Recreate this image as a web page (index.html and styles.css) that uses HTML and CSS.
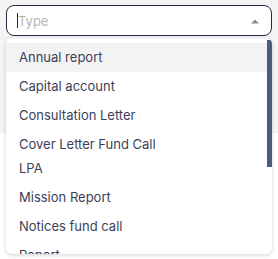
FILE: index.html
```html
<!DOCTYPE html>
<html lang="en">
<head>
    <meta charset="UTF-8">
    <meta name="viewport" content="width=device-width, initial-scale=1.0">
    <title>Type select</title>
    <link rel="stylesheet" href="styles.css">
</head>
<body>
    <div class="top-band"></div>
    <div class="select">
        <div class="select-input">
            <span class="caret"></span>
            <span class="placeholder">Type</span>
            <svg class="arrow" width="10" height="6" viewBox="0 0 10 6">
                <path d="M1 5.5 L5 1.5 L9 5.5 Z" fill="#8a8a8a"/>
            </svg>
        </div>
        <div class="menu">
            <div class="menu-list">
                <div class="option active">Annual report</div>
                <div class="option">Capital account</div>
                <div class="option">Consultation Letter</div>
                <div class="option short">Cover Letter Fund Call</div>
                <div class="option">LPA</div>
                <div class="option">Mission Report</div>
                <div class="option">Notices fund call</div>
                <div class="option">Report</div>
            </div>
            <div class="scroll-thumb"></div>
        </div>
    </div>
</body>
</html>
```

FILE: styles.css
```css
body {
    margin: 0;
    padding: 0;
    background-color: #fff;
    font-family: Inter, "Noto Sans", sans-serif;
    color: #3b3f58;
    width: 278px;
    height: 259px;
    overflow: hidden;
    position: relative;
}

.top-band {
    position: absolute;
    top: 0;
    left: 0;
    right: 0;
    height: 133px;
    background-color: #f4f4f4;
}

.select {
    position: relative;
    padding: 5px 6px 0 6px;
}

.select-input {
    display: flex;
    align-items: center;
    height: 29px;
    padding: 0 11px 0 10px;
    background: #fff;
    border: 1px solid #232a44;
    border-radius: 8px;
}

.caret {
    width: 1px;
    height: 15px;
    background: #232a44;
}

.placeholder {
    flex: 1;
    font-size: 13px;
    color: #b3b3b8;
}

.arrow {
    display: block;
}

.menu {
    position: relative;
    margin-top: 2px;
    height: 216px;
    background: #fff;
    border-radius: 6px;
    box-shadow: 0 1px 4px rgba(0, 0, 0, 0.18);
    overflow: hidden;
}

.menu-list {
    padding-top: 5px;
}

.option {
    height: 29px;
    line-height: 29px;
    padding-left: 13px;
    font-size: 13px;
    white-space: nowrap;
}

.option.active {
    background-color: #f3f3f3;
}

.option.short {
    height: 24px;
}

.scroll-thumb {
    position: absolute;
    top: 2px;
    right: 0;
    width: 5px;
    height: 127px;
    background: #4b5a7e;
}
```
